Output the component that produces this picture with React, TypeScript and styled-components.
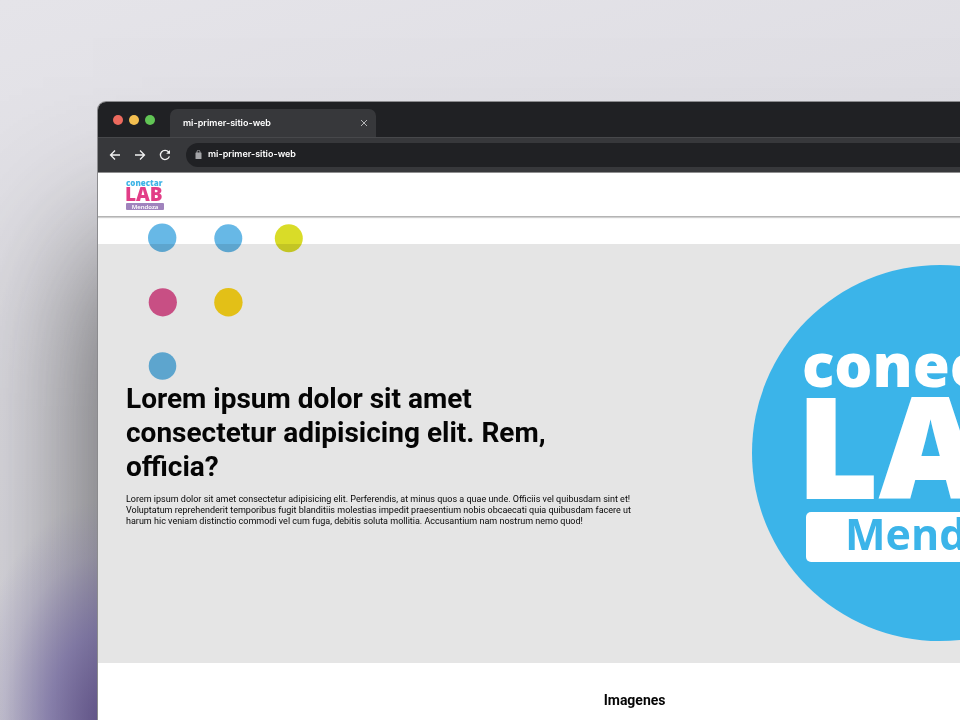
import React from "react";
import styled, { createGlobalStyle } from "styled-components";

const GlobalStyle = createGlobalStyle`
  * { box-sizing: border-box; }
  html, body, #root { height: 100%; }
  body { margin: 0; overflow: hidden; font-family: Roboto, sans-serif; color: #050505; }
  h1, h2, p { margin: 0; }
`;

const Desktop = styled.div`
  height: 100vh;
  display: flex;
  padding: 101px 0 0 97px;
  overflow: hidden;
  background: linear-gradient(165deg, #e5e4e9 0%, #dedde3 40%, #d6d5dc 100%);
`;

const Stage = styled.div`
  position: relative;
  display: flex;
  flex: none;
  width: 112vw;
`;

const Shade = styled.div`
  position: absolute;
  inset: 150px 0 -400px 0;
  box-shadow: 0 0 140px 4px rgba(60, 60, 62, 0.86);
`;

const Glow = styled.div`
  position: absolute;
  left: -125px;
  top: 400px;
  width: 260px;
  height: 440px;
  background: radial-gradient(closest-side, rgba(80, 62, 130, 0.75) 0%, rgba(98, 84, 158, 0.55) 40%, rgba(120, 108, 170, 0.2) 75%, rgba(130, 120, 180, 0) 100%);
`;

const BrowserWindow = styled.section`
  position: relative;
  flex: 1;
  display: flex;
  flex-direction: column;
  overflow: hidden;
  border: 1px solid #8b8b8e;
  border-bottom: 0;
  border-radius: 9px 9px 0 0;
  background: #fff;
`;

const TabBar = styled.div`
  display: flex;
  flex: none;
  align-items: flex-end;
  height: 35px;
  padding-left: 15px;
  background: #202124;
`;

const Lights = styled.div`
  display: flex;
  align-items: center;
  gap: 6px;
  height: 35px;
  width: 57px;
`;

const Light = styled.button<{ $color: string }>`
  width: 10px;
  height: 10px;
  padding: 0;
  border: 0;
  border-radius: 50%;
  background: ${(p) => p.$color};
`;

const Tab = styled.div`
  display: flex;
  align-items: center;
  justify-content: space-between;
  width: 206px;
  height: 28px;
  padding: 0 8px 0 13px;
  border-radius: 7px 7px 0 0;
  background: #37383b;
  color: #fff;
  font: 600 9px/14px Inter, sans-serif;
`;

const IconButton = styled.button`
  display: flex;
  padding: 0;
  border: 0;
  background: none;
  color: inherit;
`;

const Toolbar = styled.div`
  display: flex;
  flex: none;
  align-items: center;
  gap: 13px;
  height: 36px;
  padding-left: 11px;
  border-top: 1px solid #47484b;
  border-bottom: 1px solid #8f8f90;
  background: #37383b;
  color: #f1f1f1;
`;

const AddressBar = styled.label`
  display: flex;
  flex: 1;
  align-items: center;
  gap: 6px;
  height: 24px;
  margin-left: 2px;
  padding: 0 9px 2px;
  border-radius: 12px 0 0 12px;
  background: #202124;
  color: #a4a5a8;
`;

const Address = styled.input`
  flex: 1;
  padding: 0;
  border: 0;
  outline: 0;
  background: transparent;
  color: #fff;
  font: 600 9px/14px Inter, sans-serif;
`;

const SiteHeader = styled.header`
  display: flex;
  align-items: center;
  height: 44px;
  flex: none;
  padding: 0 28px;
  border-bottom: 1px solid #b4b4b4;
  box-shadow: 0 1px 1px #d0d0d0;
`;

const HomeLink = styled.a`
  display: flex;
`;

const Main = styled.main`
  position: relative;
  flex: none;
  padding-top: 27px;
`;

const Dots = styled.svg`
  position: absolute;
  left: 50px;
  top: 6px;
  z-index: 1;
  mix-blend-mode: multiply;
`;

const Hero = styled.section`
  display: grid;
  grid-template-columns: 3fr 2fr;
  align-items: center;
  padding: 21px 28px 22px;
  background: #e5e5e5;
`;

const HeroCopy = styled.div`
  display: grid;
  gap: 10px;
  max-width: 512px;
  padding-top: 2px;
`;

const HeroTitle = styled.h1`
  max-width: 440px;
  font-size: 28px;
  line-height: 34px;
  font-weight: 700;
`;

const HeroText = styled.p`
  font-size: 9px;
  line-height: 11px;
`;

const RoundLogo = styled.svg`
  display: block;
  justify-self: center;
`;

const Section = styled.section`
  padding: 28px;
  text-align: center;
`;

const SectionTitle = styled.h2`
  font-size: 14px;
  line-height: 18px;
  font-weight: 700;
`;

const logoFont = '"Noto Sans", "Open Sans", sans-serif';

function SmallLogo() {
  return (
    <svg width="40" height="34" viewBox="0 0 40 34" fontFamily={logoFont} role="img" aria-label="conectar LAB Mendoza">
      <text x="0" y="8" fontSize="8" fontWeight="900" fill="#3fb4e6">conectar</text>
      <text x="-1" y="23" fontSize="19" fontWeight="900" fill="#e23d87">LAB</text>
      <rect x="0" y="25" width="38" height="7" rx="1" fill="#a083bd" />
      <text x="19" y="31" fontSize="6" fontWeight="600" fill="#fff" textAnchor="middle">Mendoza</text>
    </svg>
  );
}

export default function App() {
  return (
    <>
      <GlobalStyle />
      <Desktop>
        <Stage>
          <Shade />
          <Glow />
          <BrowserWindow>
            <TabBar>
              <Lights>
                <Light $color="#ed6a5e" aria-label="Cerrar ventana" />
                <Light $color="#f4bf50" aria-label="Minimizar" />
                <Light $color="#61c555" aria-label="Maximizar" />
              </Lights>
              <Tab>
                mi-primer-sitio-web
                <IconButton aria-label="Cerrar pestaña">
                  <svg width="8" height="8" viewBox="0 0 8 8" stroke="#b4b5b7" strokeWidth="1"><path d="M1 1l6 6M7 1L1 7" /></svg>
                </IconButton>
              </Tab>
            </TabBar>
            <Toolbar>
              <IconButton aria-label="Atrás">
                <svg width="12" height="12" viewBox="0 0 12 12" fill="none" stroke="currentColor" strokeWidth="1.3"><path d="M11 6H1.5M6 1.5L1.5 6L6 10.5" /></svg>
              </IconButton>
              <IconButton aria-label="Adelante">
                <svg width="12" height="12" viewBox="0 0 12 12" fill="none" stroke="currentColor" strokeWidth="1.3"><path d="M1 6H10.5M6 1.5L10.5 6L6 10.5" /></svg>
              </IconButton>
              <IconButton aria-label="Recargar">
                <svg width="12" height="12" viewBox="0 0 12 12" fill="none" stroke="currentColor" strokeWidth="1.3"><path d="M10.4 7.4A4.6 4.6 0 1 1 9.6 3L10.6 4.2" /><path d="M11 1V4.8H7.2Z" fill="currentColor" stroke="none" /></svg>
              </IconButton>
              <AddressBar>
                <svg width="7" height="9" viewBox="0 0 7 9" aria-hidden="true"><rect x="0.5" y="2.5" width="6" height="6.5" rx="0.6" fill="currentColor" /><path d="M2 3V1.8a1.5 1.5 0 0 1 3 0V3" fill="none" stroke="currentColor" strokeWidth="0.9" /></svg>
                <Address aria-label="Dirección" defaultValue="mi-primer-sitio-web" />
              </AddressBar>
            </Toolbar>
            <SiteHeader>
              <HomeLink href="#"><SmallLogo /></HomeLink>
            </SiteHeader>
            <Main>
              <Dots width="156" height="158" viewBox="0 0 156 158" aria-hidden="true">
                <g fill="#67b8e6"><circle cx="14.200" cy="14.800" r="14.200" /><circle cx="80.300" cy="15.300" r="14" /><circle cx="14.500" cy="143" r="13.800" /></g>
                <circle cx="140.800" cy="15.300" r="14" fill="#d9dc28" />
                <circle cx="14.800" cy="79.300" r="14.100" fill="#df5893" />
                <circle cx="80.400" cy="79.300" r="14.200" fill="#fdd619" />
              </Dots>
              <Hero>
                <HeroCopy>
                  <HeroTitle>Lorem ipsum dolor sit amet consectetur adipisicing elit. Rem, officia?</HeroTitle>
                  <HeroText>
                    Lorem ipsum dolor sit amet consectetur adipisicing elit. Perferendis, at minus quos a quae unde. Officiis vel quibusdam sint et! Voluptatum reprehenderit temporibus fugit blanditiis molestias impedit praesentium nobis obcaecati quia quibusdam facere ut harum hic veniam distinctio commodi vel cum fuga, debitis soluta mollitia. Accusantium nam nostrum nemo quod!
                  </HeroText>
                </HeroCopy>
                <RoundLogo width="376" height="376" viewBox="0 0 376 376" fontFamily={logoFont} role="img" aria-label="conectar LAB Mendoza">
                  <circle cx="188" cy="188" r="188" fill="#3bb4e9" />
                  <text x="50" y="122" fontSize="60" fontWeight="900" fill="#fff">conectar</text>
                  <text x="45 128 224" y="233" fontSize="139" fontWeight="900" fill="#fff" stroke="#fff" strokeWidth="2">LAB</text>
                  <rect x="54" y="247" width="268" height="50" rx="5" fill="#fff" />
                  <text x="93" y="285" fontSize="43" fontWeight="700" fill="#3bb4e9" fontFamily='"Open Sans", sans-serif'>Mendoza</text>
                </RoundLogo>
              </Hero>
              <Section><SectionTitle>Imagenes</SectionTitle></Section>
            </Main>
          </BrowserWindow>
        </Stage>
      </Desktop>
    </>
  );
}
